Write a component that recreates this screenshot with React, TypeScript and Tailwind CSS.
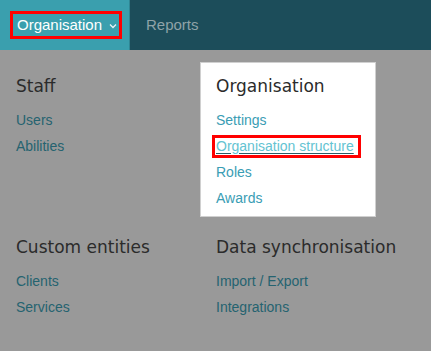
import React from "react";

type Section = { title: string; links: string[]; card?: boolean };

const sections: Section[] = [
  { title: "Staff", links: ["Users", "Abilities"] },
  { title: "Organisation", links: ["Settings", "Organisation structure", "Roles", "Awards"], card: true },
  { title: "Custom entities", links: ["Clients", "Services"] },
  { title: "Data synchronisation", links: ["Import / Export", "Integrations"] },
];

function Cell({ s }: { s: Section }) {
  return (
    <div
      className={
        s.card
          ? "bg-white border border-[#d0d0d0] px-[15px] pt-[13px] pb-[5px]"
          : "border border-transparent px-[15px] pt-[13px] pb-[5px]"
      }
    >
      <h2 className="font-['DejaVu_Sans',sans-serif] text-[17px] leading-[20px] text-[#2b2b2b] mb-[11px] whitespace-nowrap">
        {s.title}
      </h2>
      <ul className="font-['Liberation_Sans',Arial,sans-serif] text-[14px]">
        {s.links.map((l) => (
          <li key={l} className="h-[26px] flex items-center whitespace-nowrap">
            {l === "Organisation structure" ? (
              <a className="inline-block -ml-[4px] border-[3px] border-[#ff0000] pl-[1px] pr-[4px] leading-[17px] text-[#63c3d2] underline decoration-[#2c5b66] underline-offset-[2px]">
                {l}
              </a>
            ) : (
              <a className={s.card ? "text-[#3a9db4]" : "text-[#256370]"}>{l}</a>
            )}
          </li>
        ))}
      </ul>
    </div>
  );
}

export default function App() {
  return (
    <div className="min-h-screen w-full bg-[#999999]">
      <nav className="h-[50px] bg-[#1c4d5a] flex items-stretch font-['Liberation_Sans',Arial,sans-serif] text-[15px]">
        <div className="w-[130px] bg-[#3a9fae] border-r border-[#2f8593] flex items-center pl-[10px]">
          <span className="h-[28px] flex items-center border-[3px] border-[#ff0000] pl-[4px] pr-[2px] text-white">
            Organisation
            <svg width="8" height="6" viewBox="0 0 8 6" className="ml-[7px] mt-[2px]">
              <path d="M1 1.5 L4 4.5 L7 1.5" fill="none" stroke="#e8f4f6" strokeWidth="1.3" />
            </svg>
          </span>
        </div>
        <div className="flex items-center pl-[16px] text-[#8fa3a8]">Reports</div>
      </nav>
      <div className="grid grid-cols-[200px_176px] gap-y-[6px] pt-[12px]">
        {sections.map((s) => (
          <Cell key={s.title} s={s} />
        ))}
      </div>
    </div>
  );
}
